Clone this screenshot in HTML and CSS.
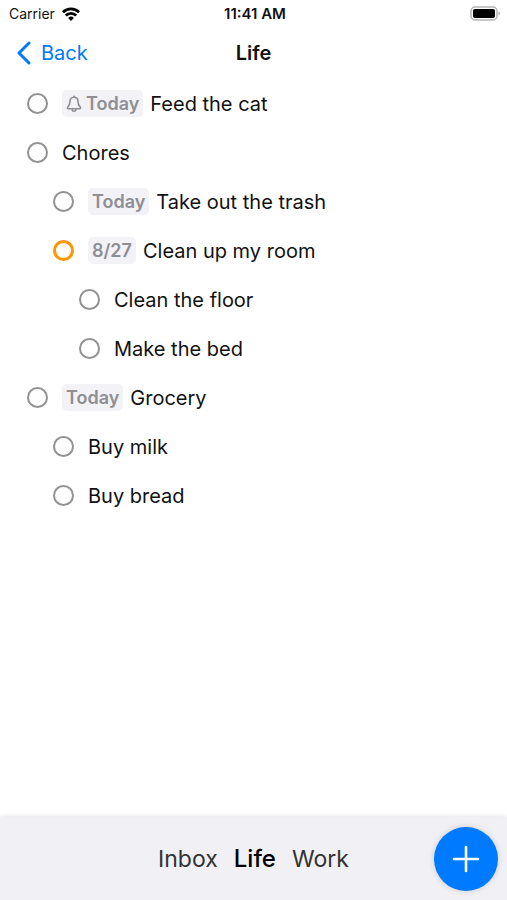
FILE: index.html
```html
<!DOCTYPE html>
<html lang="en">
<head>
    <meta charset="utf-8">
    <meta name="viewport" content="width=device-width, initial-scale=1">
    <title>Life</title>
    <link rel="stylesheet" href="styles.css">
</head>
<body>

<div class="status-bar">
    <div class="carrier">
        <span>Carrier</span>
        <svg width="18" height="14" viewBox="0 0 18 14" fill="none" stroke="#000" stroke-width="2.8">
            <path d="M1 5.200a11.300 11.300 0 0 1 16 0"/>
            <path d="M3.800 8.500a7.300 7.300 0 0 1 10.400 0"/>
            <path d="M9 14l-2.900-3a4.100 4.100 0 0 1 5.800 0z" fill="#000" stroke="none"/>
        </svg>
    </div>
    <div class="time">11:41 AM</div>
    <div class="battery">
        <svg width="31" height="15" viewBox="0 0 31 15">
            <rect x="1" y="1" width="26" height="13" rx="4" fill="#fff" stroke="#b5b5b5" stroke-width="1.5"/>
            <rect x="3" y="3" width="22" height="9" rx="2" fill="#000"/>
            <path d="M28.5 5.500a2.200 2.200 0 0 1 0 4z" fill="#a5a5a5"/>
        </svg>
    </div>
</div>

<header class="nav-bar">
    <a class="back" href="#">
        <svg width="16" height="26" viewBox="0 0 16 26" fill="none" stroke="currentColor" stroke-width="3" stroke-linecap="round" stroke-linejoin="round">
            <path d="M13 3L3 13l10 10"/>
        </svg>
        Back
    </a>
    <h1>Life</h1>
</header>

<main>
    <ul class="tasks">
        <li>
            <label class="task">
                <input type="checkbox">
                <span class="due">
                    <svg width="16" height="18" viewBox="0 0 16 18" fill="none" stroke="currentColor" stroke-width="1.600" stroke-linejoin="round">
                        <path d="M8 2.300C5.500 2.300 4 4.200 4 6.600c0 3.400-.8 4.300-2.200 5.600-.7.700-.4 1.500.5 1.500h11.400c.9 0 1.200-.8.500-1.500C12.800 10.900 12 10 12 6.600c0-2.400-1.500-4.300-4-4.300z"/>
                        <path d="M6 14c.1 1.500.9 2.300 2 2.300s1.900-.8 2-2.300"/>
                        <path d="M8 1.200v1" stroke-linecap="round"/>
                    </svg>
                    Today
                </span>
                <span>Feed the cat</span>
            </label>
        </li>
        <li>
            <label class="task"><input type="checkbox"><span>Chores</span></label>
            <ul>
                <li>
                    <label class="task"><input type="checkbox"><span class="due">Today</span><span>Take out the trash</span></label>
                </li>
                <li>
                    <label class="task"><input type="checkbox" class="priority"><span class="due">8/27</span><span>Clean up my room</span></label>
                    <ul>
                        <li><label class="task"><input type="checkbox"><span>Clean the floor</span></label></li>
                        <li><label class="task"><input type="checkbox"><span>Make the bed</span></label></li>
                    </ul>
                </li>
            </ul>
        </li>
        <li>
            <label class="task"><input type="checkbox"><span class="due">Today</span><span>Grocery</span></label>
            <ul>
                <li><label class="task"><input type="checkbox"><span>Buy milk</span></label></li>
                <li><label class="task"><input type="checkbox"><span>Buy bread</span></label></li>
            </ul>
        </li>
    </ul>
</main>

<footer class="bottom-bar">
    <nav class="lists">
        <a href="#">Inbox</a>
        <a href="#" class="current">Life</a>
        <a href="#">Work</a>
    </nav>
    <button class="add" aria-label="Add task">
        <svg width="30" height="30" viewBox="0 0 30 30" stroke="#fff" stroke-width="2.600" stroke-linecap="round">
            <path d="M15 3v24M3 15h24"/>
        </svg>
    </button>
</footer>

</body>
</html>
```
FILE: styles.css
```css
:root {
    --blue: #007aff;
    --orange: #ff9500;
    --gray: #8e8e93;
    --bar-bg: #f1f0f5;
}

* {
    box-sizing: border-box;
}

body {
    display: flex;
    flex-direction: column;
    min-height: 100vh;
    margin: 0;
    background: #fff;
    color: #111;
    font-family: Inter, sans-serif;
    font-size: 20px;
}

svg {
    display: block;
}

a {
    color: inherit;
    text-decoration: none;
}

.status-bar {
    display: grid;
    grid-template-columns: 1fr auto 1fr;
    align-items: center;
    height: 27px;
    padding: 0 6px 0 9px;
    font-size: 14px;
}

.carrier {
    display: flex;
    align-items: center;
    gap: 7px;
}

.time {
    font-size: 15px;
    font-weight: 600;
}

.battery {
    justify-self: end;
}

.nav-bar {
    display: grid;
    grid-template-columns: 1fr auto 1fr;
    align-items: center;
    height: 52px;
    padding: 0 16px;
}

.nav-bar h1 {
    margin: 0;
    font-size: 20px;
    font-weight: 600;
}

.back {
    display: flex;
    align-items: center;
    gap: 9px;
    color: var(--blue);
}

main {
    flex: 1;
    padding: 0 27px;
}

ul {
    margin: 0;
    padding: 0 0 0 26px;
    list-style: none;
}

.tasks {
    padding: 0;
}

.task {
    display: flex;
    align-items: center;
    height: 49px;
}

.task input {
    flex: none;
    appearance: none;
    width: 21px;
    height: 21px;
    margin: 0 14px 0 0;
    border: 2px solid #929292;
    border-radius: 50%;
}

.task input:checked {
    background: var(--gray);
}

.task input.priority {
    border: 3px solid var(--orange);
}

.due {
    display: flex;
    align-items: center;
    gap: 4px;
    height: 27px;
    margin-right: 7px;
    padding: 0 4px;
    border-radius: 5px;
    background: #f2f2f7;
    color: var(--gray);
    font-size: 18px;
    font-weight: 600;
}

.bottom-bar {
    display: grid;
    grid-template-columns: 1fr auto 1fr;
    align-items: center;
    height: 83px;
    padding: 0 9px;
    background: var(--bar-bg);
    box-shadow: 0 0 5px rgba(0, 0, 0, 0.15);
}

.lists {
    display: flex;
    grid-column: 2;
    align-items: center;
    gap: 16px;
    color: #333;
    font-size: 23px;
}

.lists .current {
    color: #000;
    font-size: 24px;
    font-weight: 500;
}

.add {
    display: grid;
    place-items: center;
    justify-self: end;
    width: 64px;
    height: 64px;
    padding: 0;
    border: none;
    border-radius: 50%;
    background: var(--blue);
    box-shadow: 0 0 6px rgba(0, 0, 0, 0.15);
    cursor: pointer;
}
```
